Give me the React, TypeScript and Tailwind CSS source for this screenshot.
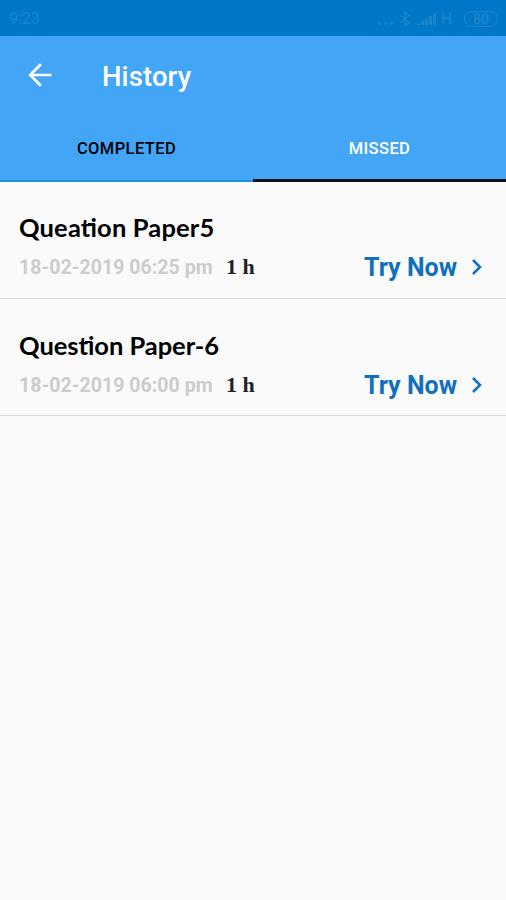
import { Fragment } from 'react';

const papers = [
    { title: 'Queation Paper5', date: '18-02-2019 06:25 pm', duration: '1 h', titleClass: 'tracking-[0.15px]' },
    { title: 'Question Paper-6', date: '18-02-2019 06:00 pm', duration: '1 h', titleClass: 'tracking-[-0.05px]' },
];

// Lato has no "ti" ligature, so the crossbar is carried over to the i
function Title({ text }: { text: string }) {
    return text.split('ti').map((part, i) => (
        <Fragment key={i}>
            {i > 0 && (
                <span className="relative after:absolute after:left-[7px] after:top-[11px] after:h-[2.5px] after:w-[7px] after:bg-black">
                    ti
                </span>
            )}
            {part}
        </Fragment>
    ));
}

function StatusBar() {
    return (
        <div className="flex h-9 items-center justify-between bg-[#0077c7] pl-[9px] pr-[8px] pt-[2px] text-[#1b85cd]">
            <span className="text-[16px] leading-none">9:23</span>
            <div className="flex items-center">
                <svg width="18" height="16" viewBox="0 0 18 16" fill="currentColor">
                    <circle cx="3.5" cy="12.5" r="1.5" />
                    <circle cx="9.5" cy="12.5" r="1.5" />
                    <circle cx="15.5" cy="12.5" r="1.5" />
                </svg>
                <svg className="ml-[5px]" width="12" height="16" viewBox="0 0 12 16" fill="none" stroke="currentColor" strokeWidth="1.5">
                    <path d="M2 4.5l8 7-4 3.5V1l4 3.5-8 7" />
                </svg>
                <svg className="ml-[6px]" width="20" height="16" viewBox="0 0 20 16" fill="currentColor">
                    <path d="M0 12h3v2H0zM4 10h3v4H4zM8 8h3v6H8zM12 5h3v9h-3zM16 2h3v12h-3z" />
                </svg>
                <span className="ml-[4px] text-[16px] font-medium leading-none">H</span>
                <span className="ml-[12px] flex h-4 w-[34px] items-center justify-center rounded-full border-[1.5px] border-[#1b85cd] text-[14px] font-bold leading-none">
                    80
                </span>
            </div>
        </div>
    );
}

export default function App() {
    return (
        <div className="h-[900px] w-[506px] overflow-hidden bg-[#fafafa] font-['Roboto',sans-serif]">
            <StatusBar />
            <header className="bg-[#42a5f5]">
                <div className="flex h-20 items-center pl-[28px] text-white">
                    <svg className="-mt-[2px]" width="24" height="24" viewBox="0 0 24 24" fill="none" stroke="currentColor" strokeWidth="2.7">
                        <path d="M23.5 12H2.5M12.8 1.3L2.2 12l10.6 10.7" />
                    </svg>
                    <h1 className="ml-[50px] mt-[2px] text-[27.5px] font-medium leading-8 tracking-[0.1px]">History</h1>
                </div>
                <div className="flex h-[66px] text-[16.5px] font-medium">
                    <button className="flex-1 border-b-2 border-[#1c93e4] pt-[3px] tracking-[0.4px] text-black">COMPLETED</button>
                    <button className="flex-1 border-b-[3px] border-[#06101c] pt-[4px] tracking-[0.4px] text-white">MISSED</button>
                </div>
            </header>
            <main className="-mt-px">
                {papers.map((paper) => (
                    <div
                        key={paper.title}
                        className="h-[117.5px] border-b-[1.5px] border-[#dcdcdc] pl-[19px] pr-[23px] pt-[30px]"
                    >
                        <h2 className={`font-['Lato',sans-serif] text-[25.5px] font-bold leading-8 text-black ${paper.titleClass}`}>
                            <Title text={paper.title} />
                        </h2>
                        <div className="mt-[11px] flex items-center justify-between leading-7">
                            <div className="flex items-center">
                                <span className="w-[207px] text-[19.5px] font-bold tracking-[0.05px] text-[#cccccc]">{paper.date}</span>
                                <span className="-mt-[2px] font-['Liberation_Serif',serif] text-[22px] font-bold text-[#222]">
                                    {paper.duration}
                                </span>
                            </div>
                            <button className="flex items-center text-[25px] font-bold leading-7 text-[#1070bd]">
                                Try Now
                                <svg className="-mt-[2px] ml-[14px]" width="12" height="16" viewBox="0 0 12 16" fill="none" stroke="currentColor" strokeWidth="2.5">
                                    <path d="M2 1l7 7-7 7" />
                                </svg>
                            </button>
                        </div>
                    </div>
                ))}
            </main>
        </div>
    );
}
